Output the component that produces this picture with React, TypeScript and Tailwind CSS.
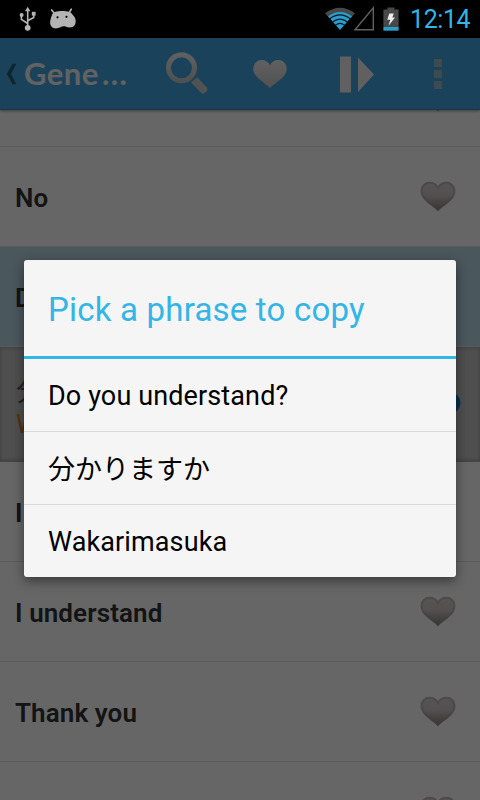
import React from "react";

interface PhraseRow {
  label: string;
  selected?: boolean;
}

const rowsBefore: PhraseRow[] = [
  { label: "" },
  { label: "No" },
  { label: "Do you understand?", selected: true },
];

const rowsAfter: PhraseRow[] = [
  { label: "I don't understand" },
  { label: "I understand" },
  { label: "Thank you" },
  { label: "" },
];

const options = [
  { text: "Do you understand?" },
  { text: "分かりますか", japanese: true },
  { text: "Wakarimasuka" },
];

function HeartIcon() {
  return (
    <svg width="38" height="34" viewBox="0 0 38 34" className="mt-px shrink-0">
      <defs>
        <linearGradient id="row-heart" x1="0" y1="0" x2="0" y2="1">
          <stop offset="0" stopColor="#dad2d3" />
          <stop offset="0.45" stopColor="#d2c8c9" />
          <stop offset="1" stopColor="#8a7e7f" />
        </linearGradient>
      </defs>
      <path
        d="M19 31.2C14.5 25.5 1.6 20.5 1.6 11C1.6 5.2 5.8 1.8 10.4 1.8C14.2 1.8 17.5 3.6 19 6.6C20.5 3.6 23.8 1.8 27.6 1.8C32.2 1.8 36.4 5.2 36.4 11C36.4 20.5 23.5 25.5 19 31.2Z"
        fill="url(#row-heart)"
      />
      {/* soft inner rim */}
      <path
        d="M19 30C14.5 24.8 2.6 20 2.6 11C2.6 5.8 6.4 2.8 10.4 2.8C14.2 2.8 17.5 4.6 19 8C20.5 4.6 23.8 2.8 27.6 2.8C31.6 2.8 35.4 5.8 35.4 11C35.4 20 23.5 24.8 19 30Z"
        fill="none"
        stroke="#a39596"
        strokeOpacity="0.4"
        strokeWidth="2"
      />
    </svg>
  );
}

function ListRow({ row }: { row: PhraseRow }) {
  return (
    <div
      className={`flex h-[100px] shrink-0 items-center justify-between border-b border-[#e3e3e3] pl-[15px] pr-[23px] ${
        row.selected ? "bg-[#b9dae6]" : "bg-white"
      }`}
    >
      <span className="whitespace-nowrap pt-[3px] text-[26px] leading-8 font-semibold tracking-[0.1px] text-[#323232]">
        {row.label}
      </span>
      <HeartIcon />
    </div>
  );
}

function StatusBar() {
  return (
    <div className="flex h-[38px] shrink-0 items-center bg-black pl-[19px] pr-[9px]">
      <svg width="18" height="26" viewBox="0 0 18 26" fill="none" stroke="#b4b4b4" strokeWidth="1.6">
        <path d="M8.7 3V21M8.7 17.5L2.4 13.3V9.5M8.7 14.8L14.7 11.5V8" />
        <path d="M8.7 0.8L11.4 5.3H6Z" fill="#b4b4b4" stroke="none" />
        <circle cx="8.7" cy="21.8" r="2.9" fill="#b4b4b4" stroke="none" />
        <circle cx="2.6" cy="9" r="2" fill="#b4b4b4" stroke="none" />
        <path d="M12.8 5.8h3.8v3.8h-3.8z" fill="#b4b4b4" stroke="none" />
      </svg>
      <svg width="28" height="22" viewBox="0 0 28 22" className="ml-3">
        <path
          d="M5.2 5.2L2.7 1.9M20 4.8L22.3 1.2"
          stroke="#b4b4b4"
          strokeWidth="1.6"
          strokeLinecap="round"
        />
        <path
          d="M2.8 7.4C3.8 3.8 8 3 13 3C18.5 3 22.4 3.8 23.8 7C26.8 9.5 27.6 14.5 25.6 17.3C23.5 20.2 19.5 19.8 16.5 18.4C14.5 18 13 18.2 11.4 19.2C8 21 3.4 21 1.7 17.4C0.4 14.6 1.6 10.4 2.8 7.4Z"
          fill="#b4b4b4"
        />
        <circle cx="8.5" cy="9.3" r="1.1" fill="#000" />
        <circle cx="17.5" cy="8.8" r="1.1" fill="#000" />
      </svg>

      <div className="ml-auto flex items-center">
        <svg width="32" height="26" viewBox="0 0 32 26" className="-ml-px">
          <path d="M0 7.2Q15 -3.8 30 7.2L26.2 11.5Q15 3.5 3.8 11.5Z" fill="#484848" />
          <path d="M3 10.3Q15 1.8 27 10.3L15 24Z" fill="#2b9dcb" />
          <path
            d="M4.8 12.7Q15 4.9 25.2 12.7M7.6 15.9Q15 10.2 22.4 15.9M10.5 19.1Q15 15.5 19.5 19.1"
            fill="none"
            stroke="#061820"
            strokeWidth="1.2"
          />
        </svg>
        <svg width="22" height="26" viewBox="0 0 22 26" className="-ml-1">
          <path d="M2 23.8L20.3 1.8V23.8Z" fill="none" stroke="#606060" strokeWidth="1.4" />
        </svg>
        <svg width="16" height="24" viewBox="0 0 16 24" className="ml-2">
          <path d="M4.5 0.5h7v2H15.6V20H0.4V2.5H4.5Z" fill="#484848" />
          <path d="M0.4 20h15.2v3.7H0.4z" fill="#2b9dcb" />
          <path d="M6.3 6.5H10.8L9.3 10.5H12L5.5 18.8L7.3 12.7H4.3Z" fill="#eee" />
        </svg>
        <span className="ml-[11px] w-[61px] whitespace-nowrap pt-[2px] text-[25px] leading-[36px] tracking-[-0.4px] text-[#33b5e5]">
          12:14
        </span>
      </div>
    </div>
  );
}

function ActionBar() {
  return (
    <div className="relative z-10 flex h-[72px] shrink-0 items-center border-b border-[#398dba] bg-[#41a7e3] shadow-[0_1px_3px_rgba(0,0,0,0.4)]">
      <svg width="12" height="22" viewBox="0 0 12 22" className="ml-[6px]">
        <path d="M6.5 0.7H10.3L5 11L10.3 21.3H6.5L0.8 11Z" fill="#255a76" />
      </svg>
      <span className="ml-[6px] w-[110px] whitespace-nowrap pb-px font-['Lato'] text-[31px] leading-10 font-bold tracking-[0.5px] text-[#f5f5f5]">
        Gene<span className="ml-[3px] tracking-[1.4px]">...</span>
      </span>
      <svg width="46" height="46" viewBox="0 0 46 46" className="ml-[30px]">
        <defs>
          <linearGradient id="search-shade" x1="0" y1="0" x2="0" y2="1">
            <stop offset="0" stopColor="#efefef" />
            <stop offset="1" stopColor="#c8c8c8" />
          </linearGradient>
        </defs>
        <circle cx="17.5" cy="16.8" r="13" fill="none" stroke="url(#search-shade)" strokeWidth="5" />
        <path
          d="M33.2 26.2L42.9 36.6Q44.3 38.4 42.6 40.2L40.6 42Q38.8 43.4 37.2 41.8L27 31.4Z"
          fill="#cdcdcd"
        />
      </svg>
      <svg width="36" height="32" viewBox="0 0 36 32" className="ml-[42px]">
        <defs>
          <linearGradient id="bar-heart" x1="0" y1="0" x2="0" y2="1">
            <stop offset="0" stopColor="#f0f0f0" />
            <stop offset="1" stopColor="#cacaca" />
          </linearGradient>
        </defs>
        <path
          d="M18 30.6C14.5 25 1.3 20 1.3 11C1.3 5.6 5 2 9.4 2C13.6 2 16.6 4 18 7.4C19.4 4 22.4 2 26.6 2C31 2 34.7 5.6 34.7 11C34.7 20 21.5 25 18 30.6Z"
          fill="url(#bar-heart)"
        />
      </svg>
      <svg width="36" height="38" viewBox="0 0 36 38" className="ml-[51px]">
        <path d="M1 1.4H12V37.4H1ZM19 2.4L35 19.4L19 37Z" fill="#f0f0f0" />
      </svg>
      <div className="ml-[59px] flex flex-col gap-[3px]">
        <div className="h-2 w-2 bg-[#9fb8c6]" />
        <div className="h-2 w-2 bg-[#9fb8c6]" />
        <div className="h-2 w-2 bg-[#9fb8c6]" />
      </div>
    </div>
  );
}

export default function App() {
  return (
    <div className="relative flex h-[800px] w-[480px] flex-col overflow-hidden bg-white font-['Roboto','Noto_Sans_CJK_JP',sans-serif]">
      <StatusBar />
      <div className="relative flex min-h-0 flex-1 flex-col overflow-hidden">
        <ActionBar />
        <div className="-mt-[63px] flex flex-col">
          {rowsBefore.map((row, i) => (
            <ListRow key={i} row={row} />
          ))}
          {/* Expanded translation of the selected phrase */}
          <div className="flex h-[115px] shrink-0 items-center justify-between border-b border-[#aaa] bg-[#c5c5c5] pl-4 pr-[19px] shadow-[inset_0_2px_3px_rgba(0,0,0,0.14),inset_0_-2px_3px_rgba(0,0,0,0.14)]">
            <div className="pt-[7px]">
              <div className="text-[27px] leading-[34px] text-[#555]">分かりますか</div>
              <div className="text-[25px] leading-8 text-[#dc7814]">Wakarimasuka</div>
            </div>
            <svg width="22" height="22" viewBox="0 0 22 22" className="mb-[2px]">
              <circle cx="11" cy="11" r="10.5" fill="#0f7cbd" />
              <path d="M8 5L17 11L8 17Z" fill="#ddd" />
            </svg>
          </div>
          {rowsAfter.map((row, i) => (
            <ListRow key={i} row={row} />
          ))}
        </div>
        <div className="absolute inset-0 z-20 bg-black/60" />
      </div>

      {/* Copy dialog */}
      <div className="absolute top-[260px] left-6 z-30 flex w-[432px] flex-col overflow-hidden rounded-[3px] bg-[#f5f5f5] shadow-[0_4px_12px_rgba(0,0,0,0.45)]">
        <h2 className="flex h-[99px] items-center border-b-[3px] border-[#33b5e5] px-6 pt-[3px] text-[33px] leading-10 tracking-[0.2px] text-[#33b5e5]">
          Pick a phrase to copy
        </h2>
        {options.map((option) => (
          <button
            key={option.text}
            type="button"
            className={`flex h-[73px] items-center border-b border-[#d8d8d8] px-6 text-left text-[27px] leading-9 text-black last:h-[72px] last:border-b-0 ${
              option.japanese ? "pt-[3px]" : "pt-px tracking-[0.12px]"
            }`}
          >
            {option.text}
          </button>
        ))}
      </div>
    </div>
  );
}
